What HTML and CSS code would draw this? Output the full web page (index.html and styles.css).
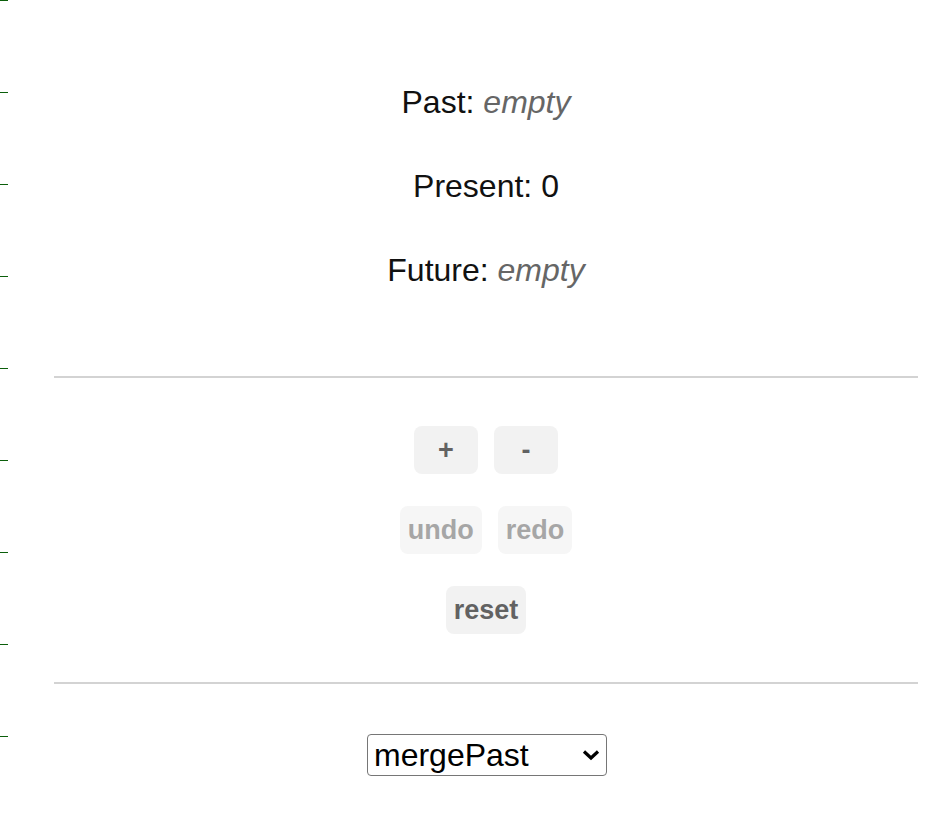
FILE: index.html
```html
<!DOCTYPE html>
<html>
<head>
<meta charset="utf-8">
<link rel="stylesheet" href="styles.css">
</head>
<body>
<div class="page">
  <section class="state">
    <div class="line">Past: <em class="empty">empty</em></div>
    <div class="line">Present: 0</div>
    <div class="line">Future: <em class="empty">empty</em></div>
  </section>
  <hr class="rule">
  <section class="controls">
    <div class="row">
      <button class="btn">+</button>
      <button class="btn">-</button>
    </div>
    <div class="row">
      <button class="btn disabled">undo</button>
      <button class="btn disabled">redo</button>
    </div>
    <div class="row">
      <button class="btn">reset</button>
    </div>
  </section>
  <hr class="rule">
  <section class="picker">
    <div class="select">
      <span class="select-text">mergePast</span>
      <svg class="chev" width="20" height="14" viewBox="0 0 20 14"><path d="M3 3.5 L10 10 L17 3.5" fill="none" stroke="#000" stroke-width="3.2" stroke-linejoin="miter"/></svg>
    </div>
  </section>
</div>
</body>
</html>
```
FILE: styles.css
```css
html, body {
  margin: 0;
  padding: 0;
}
body {
  width: 952px;
  height: 820px;
  font-family: "Liberation Sans", Arial, Helvetica, sans-serif;
  color: #111;
  background-color: #fff;
  background-image: repeating-linear-gradient(to bottom, transparent 0, transparent 91px, #0b5e0b 91px, #0b5e0b 92px);
  background-size: 8px 92px;
  background-repeat: repeat-y;
  background-position: 0 1px;
  overflow: hidden;
}
.page {
  margin-left: 54px;
  width: 864px;
}
.state {
  padding-top: 60px;
}
.line {
  height: 84px;
  line-height: 84px;
  font-size: 32px;
  text-align: center;
}
.empty {
  font-style: italic;
  color: #666;
}
.rule {
  margin: 64px 0 0 0;
  border: 0;
  height: 2px;
  background: #d3d3d3;
}
.controls {
  display: flex;
  flex-direction: column;
  align-items: center;
  gap: 32px;
  padding: 48px 0;
}
.controls + .rule {
  margin-top: 0;
}
.row {
  display: flex;
  gap: 16px;
  justify-content: center;
}
.btn {
  min-width: 64px;
  height: 48px;
  padding: 0 8px;
  border: 0;
  border-radius: 8px;
  background: #f2f2f2;
  color: #626262;
  font-family: "Liberation Sans", Arial, Helvetica, sans-serif;
  font-weight: bold;
  font-size: 27px;
}
.btn.disabled {
  color: #a6a6a6;
  background: #f6f6f6;
}
.picker {
  display: flex;
  justify-content: center;
  padding-top: 50px;
  padding-left: 2px;
}
.select {
  width: 240px;
  height: 42px;
  box-sizing: border-box;
  border: 1.5px solid #767676;
  border-radius: 4px;
  display: flex;
  align-items: center;
  justify-content: space-between;
  padding: 0 5px 0 6px;
}
.select-text {
  font-size: 32px;
  color: #000;
  line-height: 1;
}
.chev {
  display: block;
}
```
